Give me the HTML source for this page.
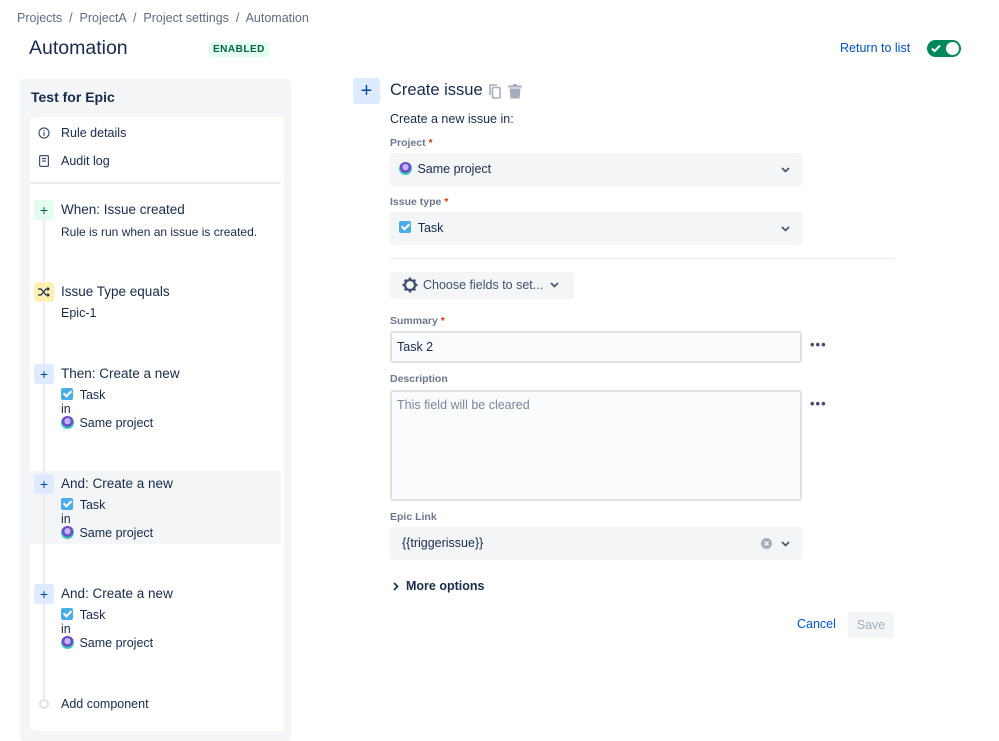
<!DOCTYPE html>
<html><head><meta charset="utf-8"><style>
*{box-sizing:border-box;margin:0;padding:0}
body{width:999px;height:737px;background:#fff;font-family:"Liberation Sans",sans-serif;color:#172b4d;position:relative;overflow:hidden;font-size:12.5px}
.a{position:absolute;white-space:nowrap}
.lbl{font-size:10.5px;font-weight:bold;color:#6b778c}
.req{color:#de350b}
.sel{position:absolute;left:390px;width:412px;background:#f4f5f7;border-radius:3px}
.chev{position:absolute;right:12px;top:50%;margin-top:-3px}
.ico{position:absolute;left:34px;width:20px;height:20px;border-radius:3px;display:flex;align-items:center;justify-content:center;font-size:14px}
.plus{background:#deebff;color:#0747a6}
.chk{display:inline-block;width:12px;height:12px;background:#4bade8;border-radius:2px;vertical-align:-1px;position:relative}
.chk:after{content:"";position:absolute;left:4px;top:1px;width:3px;height:6px;border:solid #fff;border-width:0 2px 2px 0;transform:rotate(45deg)}
.av{display:inline-block;width:13px;height:13px;border-radius:50%;background:radial-gradient(circle at 50% 40%,#c7b3ff 0 30%,#6e4cc9 31% 55%,#3dc9b8 56%);vertical-align:-2px;margin-right:2px}
.dots{position:absolute;left:810px;font-size:13px;letter-spacing:1px;color:#42526e;font-weight:bold}
.h{font-size:13.5px}
</style></head><body>
<div class="a" style="left:17px;top:11px;font-size:12.5px;color:#5e6c84">Projects &nbsp;/&nbsp; ProjectA &nbsp;/&nbsp; Project settings &nbsp;/&nbsp; Automation</div>
<div class="a" style="left:29px;top:37px;font-size:19.5px;color:#172b4d">Automation</div>
<div class="a" style="left:209px;top:42px;font-size:10px;font-weight:bold;color:#006644;background:#e3fcef;padding:2px 4px;border-radius:3px;letter-spacing:.5px">ENABLED</div>
<div class="a" style="left:840px;top:41px;font-size:12.5px;color:#0052cc">Return to list</div>
<div class="a" style="left:927px;top:40px;width:34px;height:17px;border-radius:9px;background:#00875a">
<svg style="position:absolute;left:4px;top:4px" width="10" height="9" viewBox="0 0 10 9"><path d="M1 4.5l2.6 2.6L9 1.5" stroke="#fff" stroke-width="2" fill="none"/></svg>
<div style="position:absolute;right:2px;top:2px;width:13px;height:13px;border-radius:50%;background:#fff"></div></div>

<div class="a" style="left:20px;top:79px;width:271px;height:662px;background:#f4f5f7;border-radius:4px"></div>
<div class="a" style="left:31px;top:89px;font-size:14px;font-weight:bold">Test for Epic</div>
<div class="a" style="left:30px;top:117px;width:254px;height:614px;background:#fff;border-radius:4px"></div>
<svg class="a" style="left:38px;top:127px" width="12" height="12" viewBox="0 0 12 12"><circle cx="6" cy="6" r="5" fill="none" stroke="#42526e" stroke-width="1.2"/><rect x="5.4" y="5" width="1.2" height="4" fill="#42526e"/><rect x="5.4" y="3" width="1.2" height="1.2" fill="#42526e"/></svg>
<div class="a" style="left:61px;top:126px">Rule details</div>
<svg class="a" style="left:39px;top:155px" width="10" height="12" viewBox="0 0 10 12"><rect x=".6" y=".6" width="8.8" height="10.8" rx="1" fill="none" stroke="#42526e" stroke-width="1.2"/><rect x="3" y="3" width="4" height="1.2" fill="#42526e"/><rect x="3" y="5.5" width="4" height="1.2" fill="#42526e"/></svg>
<div class="a" style="left:61px;top:154px">Audit log</div>
<div class="a" style="left:30px;top:182px;width:251px;height:2px;background:#ebecf0"></div>

<div class="a" style="left:30px;top:471px;width:251px;height:73px;background:#f4f5f7;border-radius:3px"></div>
<div class="a" style="left:43px;top:210px;width:2px;height:490px;background:#ebecf0"></div>

<div class="ico" style="top:200px;background:#e3fcef;color:#006644">+</div>
<div class="a h" style="left:61px;top:202px">When: Issue created</div>
<div class="a" style="left:61px;top:225px;font-size:12px">Rule is run when an issue is created.</div>

<div class="ico" style="top:282px;background:#fff0b3"><svg width="12" height="10" viewBox="0 0 12 10"><path d="M0 2h3l5 6h3M0 8h3l5-6h3M9.5 0.5l1.5 1.5-1.5 1.5M9.5 6.5l1.5 1.5-1.5 1.5" stroke="#172b4d" stroke-width="1.2" fill="none"/></svg></div>
<div class="a h" style="left:61px;top:284px">Issue Type equals</div>
<div class="a" style="left:61px;top:306px">Epic-1</div>

<div class="ico plus" style="top:364px">+</div>
<div class="a h" style="left:61px;top:366px">Then: Create a new</div>
<div class="a" style="left:61px;top:388px"><span class="chk"></span>&nbsp; Task</div>
<div class="a" style="left:61px;top:402px">in</div>
<div class="a" style="left:61px;top:416px"><span class="av"></span>&nbsp;Same project</div>

<div class="ico plus" style="top:474px">+</div>
<div class="a h" style="left:61px;top:476px">And: Create a new</div>
<div class="a" style="left:61px;top:498px"><span class="chk"></span>&nbsp; Task</div>
<div class="a" style="left:61px;top:512px">in</div>
<div class="a" style="left:61px;top:526px"><span class="av"></span>&nbsp;Same project</div>

<div class="ico plus" style="top:584px">+</div>
<div class="a h" style="left:61px;top:586px">And: Create a new</div>
<div class="a" style="left:61px;top:608px"><span class="chk"></span>&nbsp; Task</div>
<div class="a" style="left:61px;top:622px">in</div>
<div class="a" style="left:61px;top:636px"><span class="av"></span>&nbsp;Same project</div>

<div class="a" style="left:39px;top:699px;width:10px;height:10px;border-radius:50%;border:2px solid #dfe1e6;background:#fff"></div>
<div class="a" style="left:61px;top:697px">Add component</div>

<div class="a" style="left:353px;top:78px;width:27px;height:26px;background:#deebff;border-radius:3px;color:#0747a6;font-size:20px;text-align:center;line-height:26px">+</div>
<div class="a" style="left:390px;top:81px;font-size:16.5px">Create issue</div>
<svg class="a" style="left:489px;top:84px" width="12" height="15" viewBox="0 0 12 15"><rect x="3.5" y="3.5" width="7.5" height="10.5" rx="1" fill="#fff" stroke="#a5adba" stroke-width="1.6"/><path d="M1 11V1h7" stroke="#a5adba" stroke-width="1.6" fill="none"/></svg>
<svg class="a" style="left:508px;top:84px" width="14" height="15" viewBox="0 0 14 15"><rect x="0" y="1.5" width="14" height="2" rx="1" fill="#a5adba"/><rect x="5" y="0" width="4" height="2" fill="#a5adba"/><path d="M1.5 4.5h11l-1 10h-9z" fill="#a5adba"/></svg>
<div class="a" style="left:390px;top:112px">Create a new issue in:</div>

<div class="a lbl" style="left:390px;top:137px">Project<span class="req"> *</span></div>
<div class="sel" style="top:153px;height:33px"><div class="a" style="left:9px;top:9px"><span class="av"></span>&nbsp;Same project</div><svg class="chev" width="9" height="6" viewBox="0 0 9 6"><path d="M1 1l3.5 3.5L8 1" stroke="#42526e" stroke-width="1.6" fill="none"/></svg></div>
<div class="a lbl" style="left:390px;top:196px">Issue type<span class="req"> *</span></div>
<div class="sel" style="top:212px;height:33px"><div class="a" style="left:9px;top:9px"><span class="chk"></span>&nbsp; Task</div><svg class="chev" width="9" height="6" viewBox="0 0 9 6"><path d="M1 1l3.5 3.5L8 1" stroke="#42526e" stroke-width="1.6" fill="none"/></svg></div>
<div class="a" style="left:390px;top:258px;width:505px;height:1px;background:#ebecf0"></div>

<div class="a" style="left:390px;top:272px;width:184px;height:27px;background:#f4f5f7;border-radius:3px">
<svg class="a" style="left:12px;top:5px" width="16" height="16" viewBox="0 0 16 16"><circle cx="8" cy="8" r="5" fill="none" stroke="#42526e" stroke-width="2.2"/><g stroke="#42526e" stroke-width="2.4"><path d="M8 0.5v3M8 12.5v3M0.5 8h3M12.5 8h3M2.7 2.7l2.1 2.1M11.2 11.2l2.1 2.1M2.7 13.3l2.1-2.1M11.2 4.8l2.1-2.1"/></g></svg>
<div class="a" style="left:33px;top:6px;color:#42526e;font-size:12.5px">Choose fields to set...</div>
<svg class="a" style="left:160px;top:10px" width="9" height="6" viewBox="0 0 9 6"><path d="M1 1l3.5 3.5L8 1" stroke="#42526e" stroke-width="1.6" fill="none"/></svg></div>

<div class="a lbl" style="left:390px;top:315px">Summary<span class="req"> *</span></div>
<div class="a" style="left:390px;top:331px;width:412px;height:32px;border:2px solid #dfe1e6;background:#fafbfc;border-radius:3px"><div class="a" style="left:5px;top:7px">Task 2</div></div>
<div class="dots" style="top:337px">•••</div>
<div class="a lbl" style="left:390px;top:373px">Description</div>
<div class="a" style="left:390px;top:390px;width:412px;height:111px;border:2px solid #dfe1e6;background:#fafbfc;border-radius:3px"><div class="a" style="left:5px;top:6px;color:#7a869a">This field will be cleared</div></div>
<div class="dots" style="top:396px">•••</div>
<div class="a lbl" style="left:390px;top:511px">Epic Link</div>
<div class="sel" style="top:527px;height:33px"><div class="a" style="left:12px;top:9px">{{triggerissue}}</div>
<svg class="a" style="left:371px;top:11px" width="11" height="11" viewBox="0 0 11 11"><circle cx="5.5" cy="5.5" r="5.5" fill="#a5adba"/><path d="M3.5 3.5l4 4M7.5 3.5l-4 4" stroke="#f4f5f7" stroke-width="1.4"/></svg>
<svg class="chev" width="9" height="6" viewBox="0 0 9 6"><path d="M1 1l3.5 3.5L8 1" stroke="#42526e" stroke-width="1.6" fill="none"/></svg></div>

<svg class="a" style="left:393px;top:582px" width="6" height="9" viewBox="0 0 6 9"><path d="M1 1l3.5 3.5L1 8" stroke="#172b4d" stroke-width="1.6" fill="none"/></svg>
<div class="a" style="left:406px;top:579px;font-weight:bold;color:#172b4d">More options</div>
<div class="a" style="left:797px;top:617px;color:#0052cc">Cancel</div>
<div class="a" style="left:848px;top:612px;width:46px;height:26px;background:#f4f5f7;border-radius:3px;color:#a5adba;text-align:center;line-height:26px">Save</div>
</body></html>
